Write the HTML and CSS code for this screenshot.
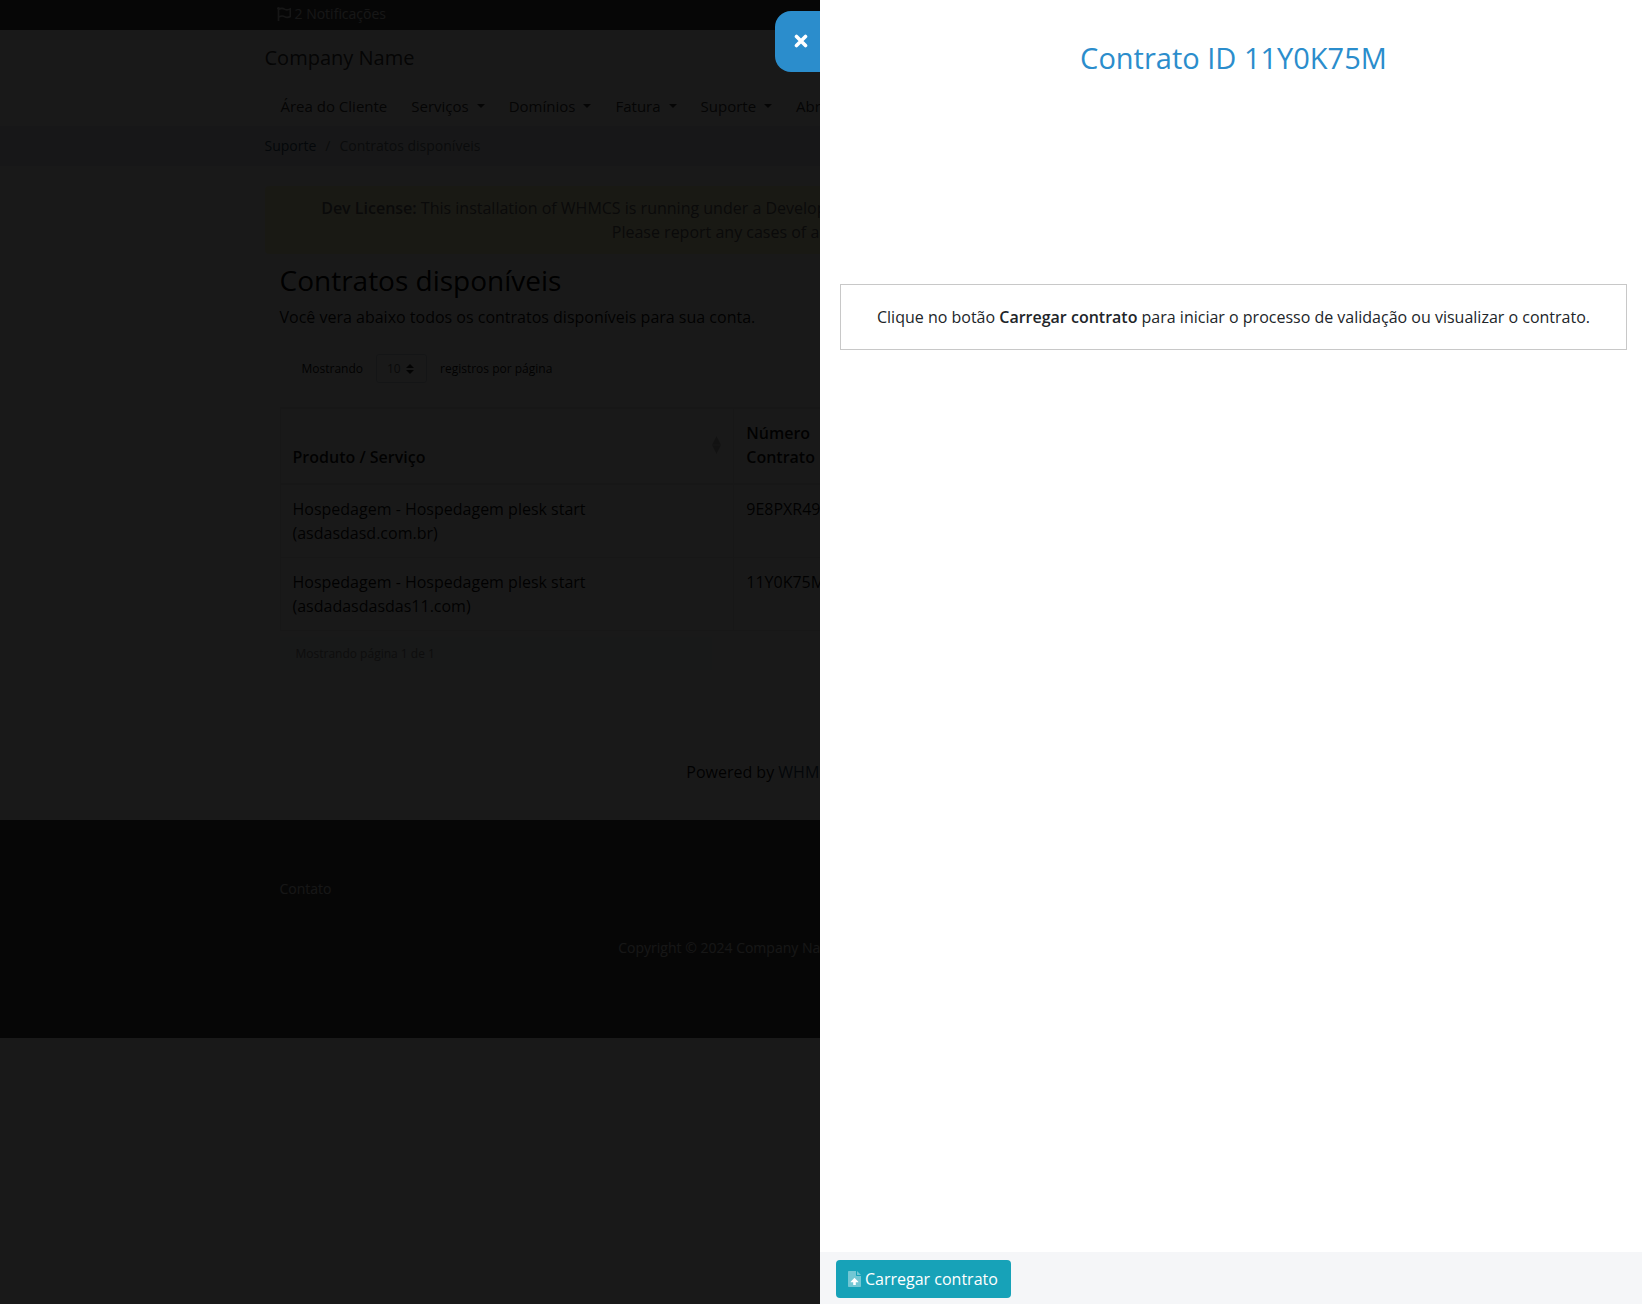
FILE: index.html
```html
<!DOCTYPE html>
<html lang="pt-BR">
<head>
  <meta charset="UTF-8">
  <meta name="viewport" content="width=device-width, initial-scale=1">
  <title>Contratos disponíveis - Company Name</title>
  <link rel="stylesheet" href="styles.css">
</head>
<body>
  <div class="site">
    <div class="topbar">
      <div class="container">
        <button type="button" class="notifications">
          <svg width="14" height="14" viewBox="0 0 14 14" fill="none" stroke="currentColor" stroke-width="1.6" aria-hidden="true">
            <path d="M1.5 1v13M1.5 2.6C4 1 6 1.2 7.500 2.200S11 3 13.300 1.900v7.600c-2 1.200-4 1-5.800.1S4 8.800 1.500 10.200"/>
            <circle cx="1.500" cy="1.300" r="1.300" fill="currentColor" stroke="none"/>
          </svg>
          <span>2 Notificações</span>
        </button>
      </div>
    </div>

    <header class="header">
      <div class="container">
        <a class="brand" href="#">Company Name</a>
        <nav>
          <ul class="menu">
            <li><a href="#">Área do Cliente</a></li>
            <li><a class="dropdown" href="#">Serviços</a></li>
            <li><a class="dropdown" href="#">Domínios</a></li>
            <li><a class="dropdown" href="#">Fatura</a></li>
            <li><a class="dropdown" href="#">Suporte</a></li>
            <li><a href="#">Abrir Ticket</a></li>
          </ul>
        </nav>
      </div>
    </header>

    <div class="breadcrumb-bar">
      <ol class="container breadcrumb">
        <li><a href="#">Suporte</a></li>
        <li>Contratos disponíveis</li>
      </ol>
    </div>

    <main class="container main">
      <div class="alert">
        <strong>Dev License:</strong> This installation of WHMCS is running under a Development License and is not authorized to be used for production use.<br>
        Please report any cases of abuse to abuse@whmcs.com
      </div>

      <section class="content">
        <h1>Contratos disponíveis</h1>
        <p>Você vera abaixo todos os contratos disponíveis para sua conta.</p>

        <div class="length">
          <label for="page-length">Mostrando</label>
          <select id="page-length">
            <option>10</option>
            <option>25</option>
            <option>50</option>
          </select>
          <span>registros por página</span>
        </div>

        <table class="contracts">
          <thead>
            <tr>
              <th class="product">
                <div class="sortable">
                  <span>Produto / Serviço</span>
                  <svg class="sort" width="9" height="18" viewBox="0 0 9 18" aria-hidden="true"><path d="M4.500 0l4.500 8.700H0zM4.500 18L9 9.300H0z" fill="currentColor"/></svg>
                </div>
              </th>
              <th>Número<br>Contrato</th>
            </tr>
          </thead>
          <tbody>
            <tr>
              <td>Hospedagem - Hospedagem plesk start<br>(asdasdasd.com.br)</td>
              <td>9E8PXR49</td>
            </tr>
            <tr>
              <td>Hospedagem - Hospedagem plesk start<br>(asdadasdasdas11.com)</td>
              <td>11Y0K75M</td>
            </tr>
          </tbody>
        </table>
        <div class="table-info">Mostrando página 1 de 1</div>
      </section>

      <p class="powered">Powered by <a href="#">WHMCompleteSolution</a></p>
    </main>

    <footer class="footer">
      <div class="container">
        <a href="#">Contato</a>
        <p>Copyright © 2024 Company Name. Todos direitos reservados.</p>
      </div>
    </footer>
  </div>

  <div class="backdrop"></div>

  <aside class="panel" role="dialog" aria-labelledby="panel-title">
    <button type="button" class="close" aria-label="Fechar">
      <svg width="14" height="14" viewBox="0 0 14 14" aria-hidden="true">
        <path d="M2.500 2.500l9 9M11.500 2.500l-9 9" stroke="currentColor" stroke-width="3.600" stroke-linecap="round"/>
      </svg>
    </button>
    <div class="panel-body">
      <h2 id="panel-title">Contrato ID 11Y0K75M</h2>
      <div class="message">Clique no botão <strong>Carregar contrato</strong> para iniciar o processo de validação ou visualizar o contrato.</div>
    </div>
    <div class="panel-footer">
      <button type="button" class="load">
        <svg width="13" height="16" viewBox="0 0 13 16" fill="#fff" aria-hidden="true">
          <path opacity=".4" d="M8 0H.8Q0 0 0 .8v14.400q0 .8.800.800h11.400q.8 0 .8-.8V5H8.800Q8 5 8 4.200z"/>
          <path opacity=".4" d="M9 0v4h4z"/>
          <path d="M6.500 6.800l3.800 3.900q.3.500-.3.500H7.800V14H5.200v-2.800H3q-.6 0-.3-.5z"/>
        </svg>
        <span>Carregar contrato</span>
      </button>
    </div>
  </aside>
</body>
</html>
```
FILE: styles.css
```css
* {
  box-sizing: border-box;
}

body {
  margin: 0;
  min-height: 100vh;
  background: #fff;
  color: #111;
  font-family: "Open Sans", sans-serif;
  font-size: 16px;
  line-height: 24px;
}

h1, h2, p, ul, ol {
  margin: 0;
  padding: 0;
  font-weight: 400;
}

ul, ol {
  list-style: none;
}

a {
  color: inherit;
  text-decoration: none;
}

button, select {
  font-family: inherit;
  cursor: pointer;
}

strong, th {
  font-weight: 600;
}

.site {
  padding-right: 3px;
  overflow: hidden;
}

.container {
  width: 100%;
  max-width: 1140px;
  margin: 0 auto;
  padding: 0 15px;
}

/* header */
.topbar {
  background: #3c3c3c;
}

.notifications {
  display: flex;
  align-items: center;
  gap: 4px;
  height: 30px;
  padding: 0 12px 3px;
  border: 0;
  background: none;
  color: #e0e0e0;
  font-size: 14px;
}

.header {
  padding-top: 13px;
}

.brand {
  display: block;
  margin-bottom: 13px;
  color: #333;
  font-size: 20px;
  line-height: 30px;
}

.menu {
  display: flex;
  gap: 24px;
  padding: 0 16px;
  color: #333;
  font-size: 15px;
}

.menu a {
  display: flex;
  align-items: center;
  gap: 8px;
  padding: 8px 0;
  white-space: nowrap;
}

.dropdown::after {
  content: "";
  border-top: 4px solid;
  border-left: 4px solid transparent;
  border-right: 4px solid transparent;
}

.breadcrumb-bar {
  padding: 9px 0 10px;
  background: #e9ecef;
}

.breadcrumb {
  display: flex;
  color: #6c757d;
  font-size: 14px;
  line-height: 21px;
}

.breadcrumb a {
  color: #2b4a66;
}

.breadcrumb li + li::before {
  content: "/";
  padding: 0 9px;
}

/* page content */
.main {
  padding-top: 20px;
}

.alert {
  padding: 10px 20px;
  border-radius: 4px;
  background: #fffbcd;
  color: #666;
  text-align: center;
}

.content {
  padding: 9px 15px 0;
}

h1 {
  margin-bottom: 8px;
  color: #000;
  font-size: 28px;
  line-height: 34px;
}

.length {
  display: flex;
  align-items: center;
  gap: 13px;
  padding: 25px 22px 24px;
  font-size: 12px;
}

.length select {
  width: 51px;
  height: 29px;
  padding: 0 10px;
  border: 1px solid #ced4da;
  border-radius: 3px;
  appearance: none;
  background: #fff url("data:image/svg+xml,%3Csvg xmlns='http://www.w3.org/2000/svg' viewBox='0 0 8 10'%3E%3Cpath fill='%23222' d='M4 0L0 4h8zM4 10l4-4H0z'/%3E%3C/svg%3E") no-repeat right 12px center / 8px 10px;
  color: #666;
  font-size: 12px;
}

.contracts {
  width: 100%;
  border: 1px solid #e4e7ea;
  border-spacing: 0;
  table-layout: fixed;
}

.contracts th,
.contracts td {
  padding: 12px;
  border-top: 1px solid #e4e7ea;
  text-align: left;
  vertical-align: top;
}

.contracts th {
  padding-bottom: 14px;
  border-bottom: 2px solid #e4e7ea;
}

.contracts tbody tr:first-child td {
  border-top: 0;
}

.contracts th + th,
.contracts td + td {
  border-left: 1px solid #e4e7ea;
}

.contracts .product {
  width: 42%;
  vertical-align: bottom;
}

.sortable {
  display: flex;
  align-items: flex-end;
  justify-content: space-between;
}

.sort {
  margin-bottom: 15px;
  color: #bbb;
}

.table-info {
  width: 40%;
  margin-top: 6px;
  padding: 8px 16px;
  background: #f0f9f8;
  color: #888;
  font-size: 12px;
  line-height: 17px;
}

.powered {
  padding: 90px 0 36px;
  text-align: center;
}

.powered a {
  color: #2b4a66;
}

.footer {
  margin-right: -3px;
  padding: 58px 3px 80px 0;
  background: #3c3c3c;
  color: #e0e0e0;
  font-size: 14px;
  line-height: 21px;
}

.footer a {
  display: block;
  margin: 0 15px 38px;
}

.footer p {
  text-align: center;
}

/* contract panel */
.backdrop {
  position: fixed;
  inset: 0;
  background: rgba(0, 0, 0, 0.9);
}

.panel {
  position: fixed;
  top: 0;
  right: 0;
  bottom: 0;
  display: flex;
  flex-direction: column;
  width: calc(50% + 1px);
  background: #fff;
  color: #212529;
}

.close {
  position: absolute;
  top: 11px;
  right: 100%;
  display: flex;
  align-items: center;
  justify-content: flex-end;
  width: 45px;
  height: 61px;
  padding: 0 12px 2px;
  border: 0;
  border-radius: 16px 0 0 16px;
  background: #2b8dcc;
  color: #fff;
}

.panel-body {
  flex: 1;
  padding: 40px 15px 20px 20px;
  overflow: auto;
  text-align: center;
}

.panel-body h2 {
  margin-bottom: 208px;
  color: #2b8dcc;
  font-size: 29px;
  line-height: 36px;
}

.message {
  padding: 20px;
  border: 1px solid #c8c8c8;
}

.panel-footer {
  padding: 8px 16px 6px;
  background: #f5f6f8;
}

.load {
  display: flex;
  align-items: center;
  gap: 4px;
  height: 38px;
  padding: 0 13px 0 12px;
  border: 0;
  border-radius: 4px;
  background: #17a2b8;
  color: #fff;
  font-size: 16px;
}
```
